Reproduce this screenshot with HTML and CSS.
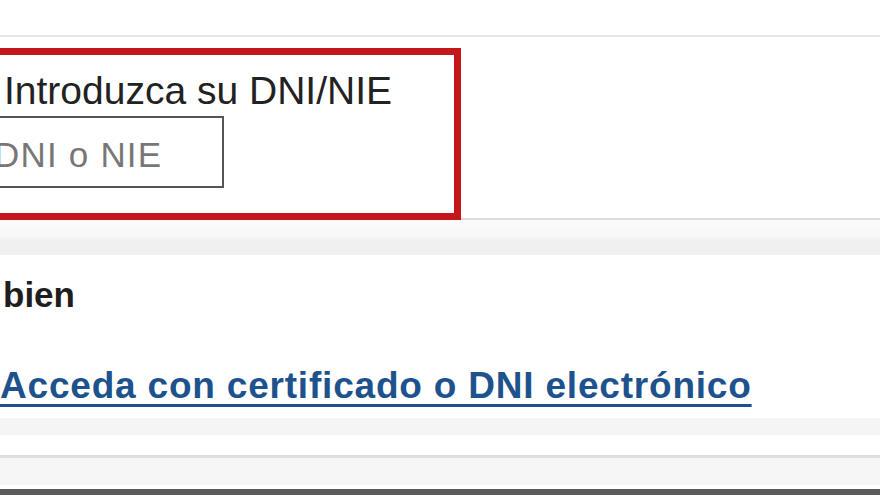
FILE: index.html
```html
<!doctype html>
<html lang="es">
<head>
  <meta charset="utf-8">
  <title>Acceso - DNI/NIE</title>
  <link rel="stylesheet" href="styles.css">
</head>
<body>
  <div class="topBar"></div>
  <section class="card cardId">
    <div class="highlight">
      <label class="idLabel" for="dni">Introduzca su DNI/NIE</label>
      <input type="text" id="dni" class="idInput" placeholder="DNI o NIE">
    </div>
  </section>
  <div class="gap"></div>
  <section class="card cardAlt">
    <p class="altTitle">bien</p>
    <a class="certLink" href="#">Acceda con certificado o DNI electrónico</a>
  </section>
  <div class="gapSmall"></div>
  <div class="footer">
    <div class="footerStrip"></div>
    <div class="footerBar"></div>
  </div>
</body>
</html>
```

FILE: styles.css
```css
html, body {
  margin: 0;
  padding: 0;
  background: #fff;
  overflow: hidden;
  font-family: "Liberation Sans", Arial, sans-serif;
}
.topBar {
  height: 35px;
  border-bottom: 2px solid #e6e6e6;
}
.card {
  background: #fff;
}
.cardId {
  display: flow-root;
  border-bottom: 2px solid #dcdcdc;
}
.highlight {
  margin: 11px 0 -2px -40px;
  width: 450px;
  padding: 14px 0 25px 37px;
  border: 7px solid #c4171b;
  background: #fff;
}
.idLabel {
  display: block;
  font-size: 39px;
  line-height: 44px;
  color: #222;
}
.idInput {
  display: block;
  box-sizing: border-box;
  margin: 3px 0 0 -20px;
  width: 240px;
  height: 72px;
  padding: 6px 8px 0;
  border: 2px solid #555;
  border-radius: 0;
  font-family: "Liberation Sans", Arial, sans-serif;
  font-size: 35px;
  letter-spacing: 1.2px;
  color: #222;
  outline: none;
}
.idInput::placeholder {
  color: #777;
}
.gap {
  height: 35px;
  background: linear-gradient(#fbfbfb, #f8f8f8 45%, #efefef 60%, #f1f1f1);
}
.cardAlt {
  display: flow-root;
  padding: 20px 0 11px 3px;
}
.altTitle {
  margin: 0;
  font-size: 35px;
  line-height: 40px;
  font-weight: bold;
  color: #1e1e1e;
}
.certLink {
  display: inline-block;
  margin: 50px 0 0 -3px;
  font-size: 37px;
  line-height: 42px;
  font-weight: bold;
  letter-spacing: 0.8px;
  color: #1d528c;
  text-decoration: underline;
  text-decoration-thickness: 3px;
  text-underline-offset: 6px;
}
.gapSmall {
  height: 17px;
  background: #f5f5f5;
}
.footer {
  padding-top: 20px;
}
.footerStrip {
  height: 27px;
  border-top: 3px solid #dedede;
  background: #f6f6f6;
  margin-bottom: 4px;
}
.footerBar {
  height: 10px;
  background: #5a5a5a;
}
```
